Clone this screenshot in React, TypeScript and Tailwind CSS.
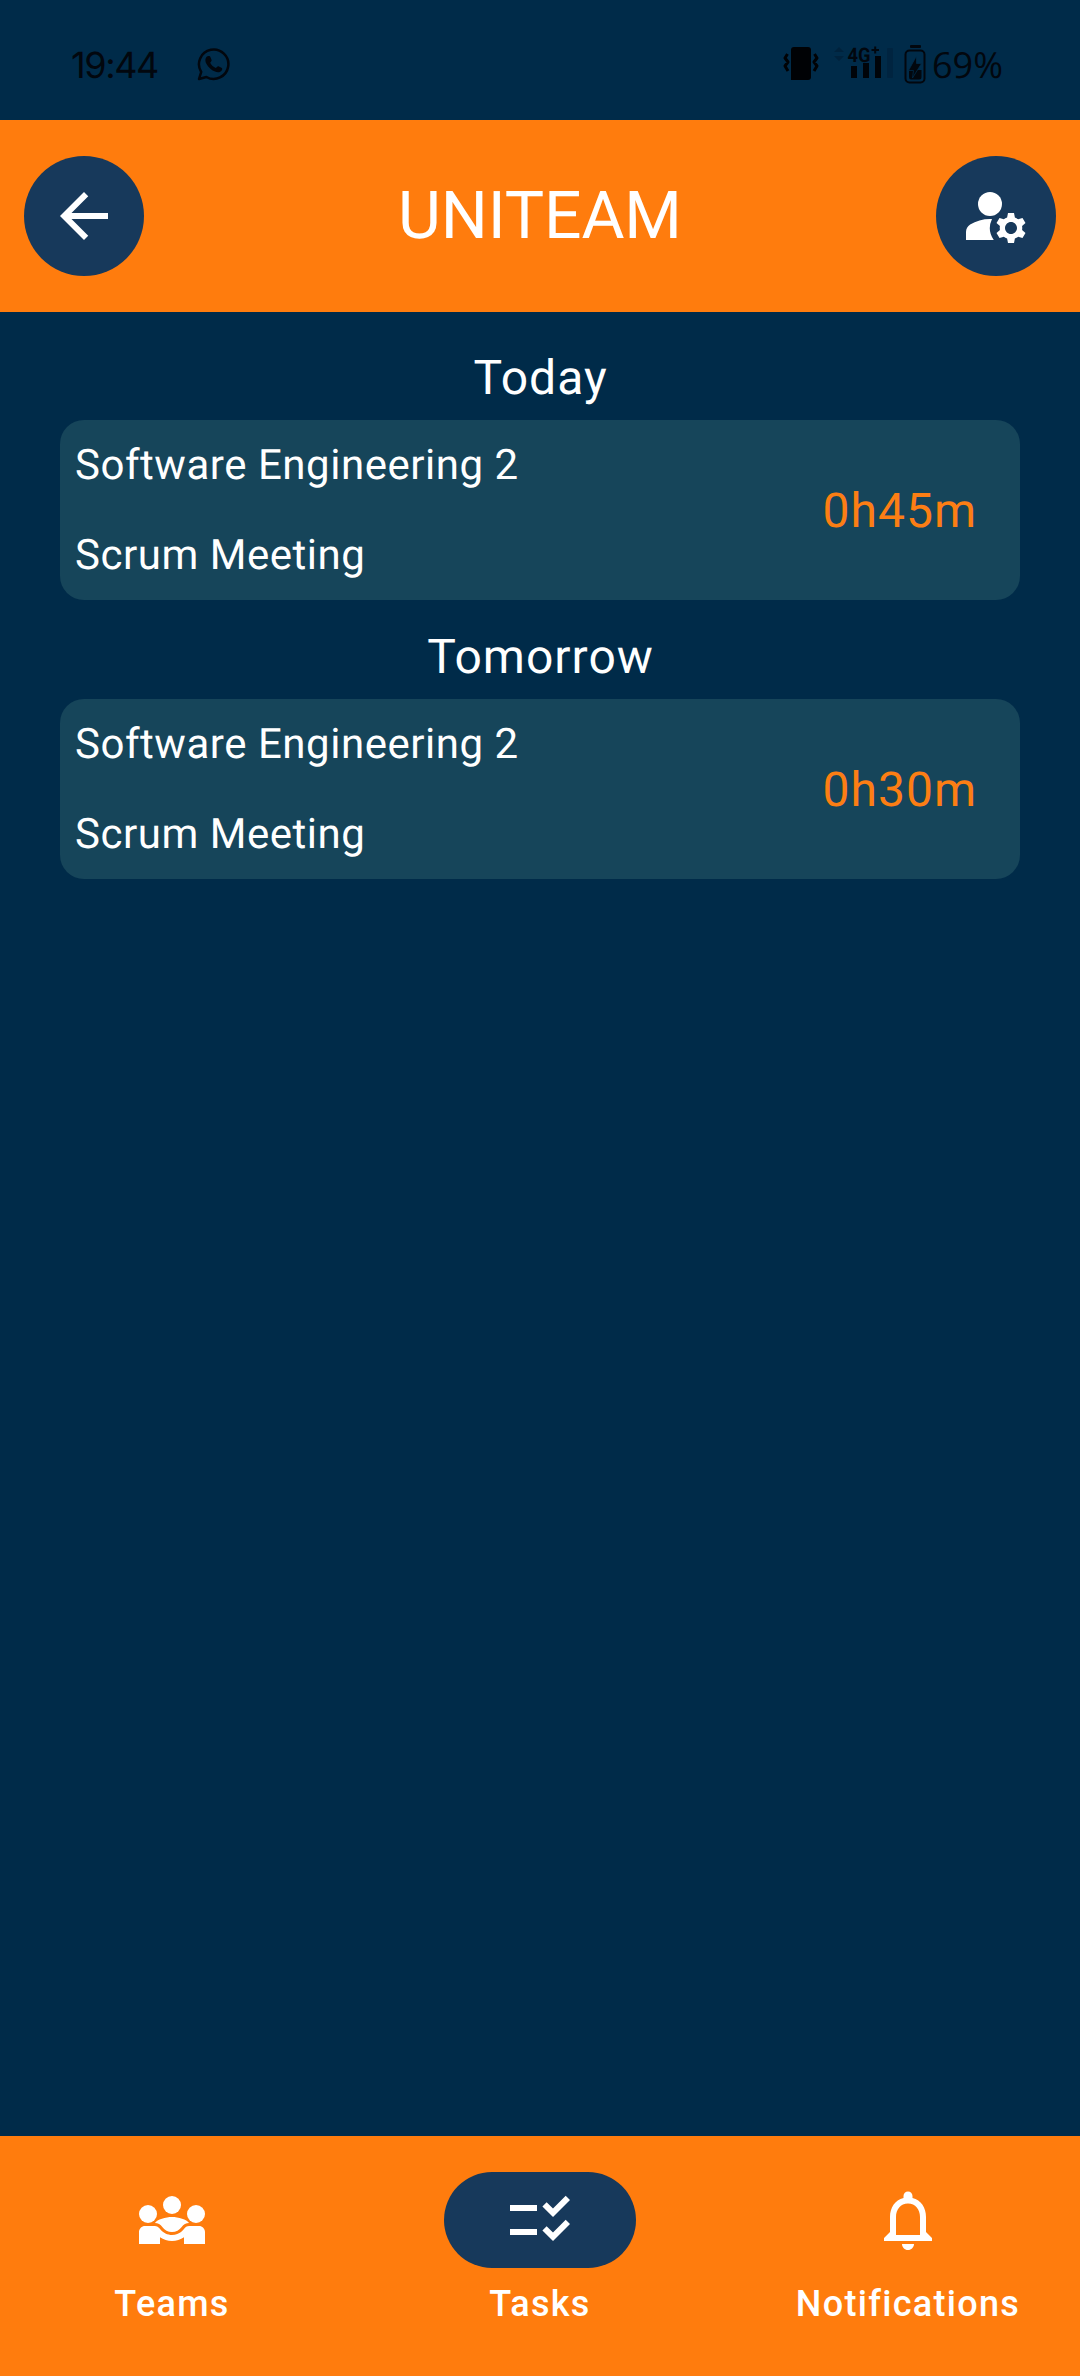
import React from "react";
import { MdArrowBack, MdChecklistRtl, MdManageAccounts, MdNotificationsNone } from "react-icons/md";

const meetings = [
  { day: "Today", team: "Software Engineering 2", title: "Scrum Meeting", time: "0h45m" },
  { day: "Tomorrow", team: "Software Engineering 2", title: "Scrum Meeting", time: "0h30m" },
];

function TeamsIcon() {
  return (
    <svg viewBox="0 0 24 24" className="size-[72px]" fill="currentColor">
      <path d="M6.32 13.01c.96.02 1.85.5 2.45 1.34A3.961 3.961 0 0 0 12 16c1.29 0 2.5-.62 3.23-1.66.6-.84 1.49-1.32 2.45-1.34-.72-1.22-3.6-2-5.68-2-2.07 0-4.96.78-5.68 2.01z" />
      <circle cx="4" cy="10" r="3" />
      <circle cx="20" cy="10" r="3" />
      <circle cx="12" cy="7" r="3" />
      <path d="M21 14h-3.27c-.77 0-1.35.45-1.68.92-.04.06-1.36 2.08-4.05 2.08-1.43 0-3.03-.64-4.05-2.08-.39-.55-1-.92-1.68-.92H3c-1.1 0-2 .9-2 2v4h7v-2.26c1.15.8 2.54 1.26 4 1.26s2.85-.46 4-1.26V20h7v-4c0-1.1-.9-2-2-2z" />
    </svg>
  );
}

function WhatsAppIcon() {
  return (
    <svg viewBox="0 0 34 34" className="mb-[2px] ml-[38px] size-[34px]">
      <path d="M4.2 25A14.7 14.7 0 1 1 9.4 30L2 32Z" fill="none" stroke="#02070e" strokeWidth="2.5" strokeLinejoin="round" />
      <path d="M10.5 9.2C12 8.6 13 8.8 13.6 10.4L14.6 13C14.9 14 13.6 15 13.2 15.8C14.5 18.2 16.3 20 18.8 21C19.8 20.4 20.4 18.9 21.5 19.3L24.4 20.7C25.6 21.3 25.4 22.4 24.7 23.5C23.5 25.4 20.6 25.7 18 24.6C14 23 11.3 20 9.4 16.7C7.8 13.8 8.1 10.6 10.5 9.2Z" fill="#02070e" />
    </svg>
  );
}

function VibrateIcon() {
  return (
    <svg viewBox="0 0 36 36" className="mb-[2px] h-9 w-9">
      <path d="M11 1H25Q28 1 28 4V31Q28 34 25 34H8V4Q8 1 11 1Z" fill="#000205" />
      <path d="M4.5 8L2 12L5 16L2 20L5 25M31.500 8L34 12L31 16L34 20L31 25" fill="none" stroke="#000205" strokeWidth="3" strokeLinejoin="round" />
    </svg>
  );
}

function SignalIcon() {
  return (
    <svg viewBox="0 0 60 36" className="mb-[3px] ml-[15px] h-9 w-[60px] overflow-visible">
      <path d="M0 7L5 2L10 7ZM0 11L5 16L10 11Z" fill="#00223c" />
      <text x="13.500" y="16.500" fontSize="20" fontWeight="700" fontFamily="Roboto, sans-serif" textLength="23" lengthAdjust="spacingAndGlyphs" fill="#02070e">4G</text>
      <path d="M37.500 5H45M41.200 1.500V8.500" stroke="#02070e" strokeWidth="2" />
      <path d="M17 21h6v12h-6zM29 18h6v15h-6zM41 11h6v22h-6z" fill="#000409" />
      <rect x="53" y="3" width="6" height="30" rx="1" fill="#002440" />
    </svg>
  );
}

function BatteryIcon() {
  return (
    <svg viewBox="0 0 22 40" className="ml-[10px] h-10 w-[22px]">
      <rect x="6" y="0" width="11" height="3" rx="1" fill="#02070e" />
      <rect x="1.500" y="5.500" width="19" height="32" rx="4" fill="none" stroke="#02070e" strokeWidth="2" />
      <path d="M5 25H17.500V32Q17.500 34.500 15 34.500H7Q5 34.500 5 32Z" fill="#02070e" />
      <path d="M12.500 11L4.500 25.500H9.500L8.500 33L17.500 18.500H12.500Z" fill="#02070e" stroke="#002b49" strokeWidth=".8" />
    </svg>
  );
}

function StatusBar() {
  return (
    <div className="flex h-[120px] items-center pt-[9px] pr-[78px] pl-[71px] text-[#02070e]">
      <span className="w-[88px] font-['Inter',sans-serif] text-[36px] leading-[42px] tracking-[-1.4px] whitespace-nowrap">19:44</span>
      <WhatsAppIcon />
      <div className="ml-auto flex items-center">
        <VibrateIcon />
        <SignalIcon />
        <BatteryIcon />
        <span className="ml-[6px] w-[70px] font-['Open_Sans',sans-serif] text-[36px] leading-[42px] whitespace-nowrap">69%</span>
      </div>
    </div>
  );
}

function NavItem({ label, active, children }: { label: string; active?: boolean; children: React.ReactNode }) {
  return (
    <button className="flex flex-1 flex-col items-center gap-3 pt-9">
      <span className={`flex h-24 w-48 items-center justify-center rounded-full ${active ? "bg-[#17395b]" : ""}`}>
        {children}
      </span>
      <span className="text-[36px] leading-[48px] font-medium tracking-[1.3px]">{label}</span>
    </button>
  );
}

export default function App() {
  return (
    <div className="flex h-[2376px] w-full flex-col bg-[#002b49] font-['Roboto',sans-serif] text-white [text-rendering:geometricPrecision]">
      <StatusBar />
      <header className="flex h-[192px] items-center justify-between bg-[#ff7c0d] px-6">
        <button className="flex size-[120px] items-center justify-center rounded-full bg-[#17395b]">
          <MdArrowBack className="size-[72px]" />
        </button>
        <h1 className="pt-[2px] text-[66px] leading-[84px] tracking-[-0.1px]">UNITEAM</h1>
        <button className="flex size-[120px] items-center justify-center rounded-full bg-[#17395b]">
          <MdManageAccounts className="size-[72px]" />
        </button>
      </header>
      <main className="flex-1 px-[60px] pt-[9px]">
        {meetings.map((m) => (
          <section key={m.day} className="pt-[21px]">
            <h2 className="pl-px text-center text-[48px] leading-[72px] tracking-[1px]">{m.day}</h2>
            <div className="mt-[6px] flex h-[180px] items-center justify-between rounded-[24px] bg-[#16455a] pt-[2px] pr-[43px] pl-[15px]">
              <div className="flex flex-col gap-[30px] text-[42px] leading-[60px] tracking-[0.53px]">
                <p>{m.team}</p>
                <p>{m.title}</p>
              </div>
              <span className="text-[48px] leading-[72px] tracking-[1px] text-[#fc7e14]">{m.time}</span>
            </div>
          </section>
        ))}
      </main>
      <nav className="flex h-[240px] gap-6 bg-[#ff7c0d]">
        <NavItem label="Teams"><TeamsIcon /></NavItem>
        <NavItem label="Tasks" active><MdChecklistRtl className="size-[72px]" /></NavItem>
        <NavItem label="Notifications"><MdNotificationsNone className="size-[72px]" /></NavItem>
      </nav>
    </div>
  );
}
